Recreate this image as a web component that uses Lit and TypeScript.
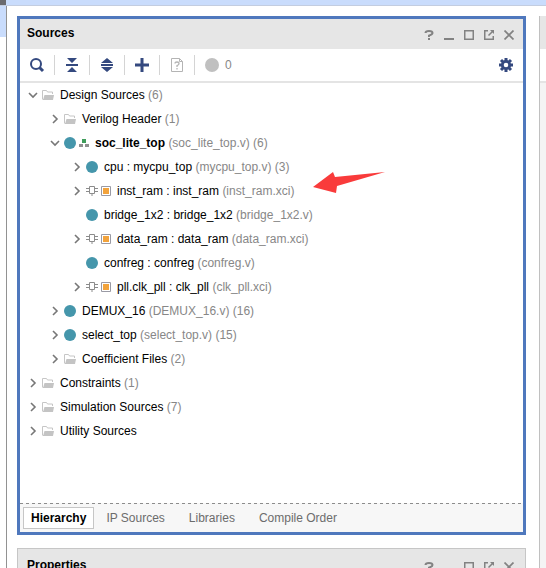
import { LitElement, html, svg, css, nothing } from "lit";
import { customElement, property, state } from "lit/decorators.js";
import { classMap } from "lit/directives/class-map.js";

type Icon = "folder" | "module" | "top" | "ip";

interface TreeNode {
  name: string;
  note?: string;
  icon: Icon;
  bold?: boolean;
  marked?: boolean;
  open?: boolean;
  expandable?: boolean;
  children?: TreeNode[];
}

const SOURCES: TreeNode[] = [
  {
    name: "Design Sources", note: "(6)", icon: "folder", open: true, expandable: true,
    children: [
      { name: "Verilog Header", note: "(1)", icon: "folder", expandable: true },
      {
        name: "soc_lite_top", note: "(soc_lite_top.v) (6)", icon: "top", bold: true, open: true, expandable: true,
        children: [
          { name: "cpu : mycpu_top", note: "(mycpu_top.v) (3)", icon: "module", expandable: true },
          { name: "inst_ram : inst_ram", note: "(inst_ram.xci)", icon: "ip", expandable: true, marked: true },
          { name: "bridge_1x2 : bridge_1x2", note: "(bridge_1x2.v)", icon: "module" },
          { name: "data_ram : data_ram", note: "(data_ram.xci)", icon: "ip", expandable: true },
          { name: "confreg : confreg", note: "(confreg.v)", icon: "module" },
          { name: "pll.clk_pll : clk_pll", note: "(clk_pll.xci)", icon: "ip", expandable: true },
        ],
      },
      { name: "DEMUX_16", note: "(DEMUX_16.v) (16)", icon: "module", expandable: true },
      { name: "select_top", note: "(select_top.v) (15)", icon: "module", expandable: true },
      { name: "Coefficient Files", note: "(2)", icon: "folder", expandable: true },
    ],
  },
  { name: "Constraints", note: "(1)", icon: "folder", expandable: true },
  { name: "Simulation Sources", note: "(7)", icon: "folder", expandable: true },
  { name: "Utility Sources", icon: "folder", expandable: true },
];

const icon = (w: number, h: number, body: unknown) =>
  html`<svg width=${w} height=${h} viewBox="0 0 ${w} ${h}" aria-hidden="true">${body}</svg>`;

const folder = icon(12, 12, svg`
  <path d="M.5 10V1.5H4.5L5.5 3H10.5V5" fill="none" stroke="#c6c6c6"/>
  <path d="M2.5 6H12L11 11H1Z" fill="#c4c4c4"/>
  <path d="M.5 10.5H11" stroke="#c4c4c4"/>`);
const disc = icon(12, 12, svg`<circle cx="6" cy="6" r="6" fill="#4596ab"/>`);
const hierarchy = icon(10, 10, svg`
  <path d="M3 1H7V5H3Z" fill="#3f9d5b"/>
  <path d="M0 6H4V9H0ZM6 6H10V9H6Z" fill="#8f8f8f"/>`);
const chip = icon(12, 12, svg`
  <path d="M3.5 1.5H8.5V8.5H3.5ZM0 3.5H3M0 6.5H3M9 3.5H12M9 6.5H12M6 9V11" fill="none" stroke="#8c8c8c"/>`);
const core = icon(10, 10, svg`
  <path d="M.5 .5H9.5V9.5H.5Z" fill="#fff" stroke="#9a9aa4"/>
  <path d="M2 2H8V8H2Z" fill="#f2a33c"/>`);
const chevronDown = icon(12, 12, svg`<path d="M2 4L6 8L10 4" fill="none" stroke="#777" stroke-width="1.6"/>`);
const chevronRight = icon(12, 12, svg`<path d="M4 2L8 6L4 10" fill="none" stroke="#777" stroke-width="1.6"/>`);

const search = icon(16, 16, svg`
  <circle cx="7" cy="7" r="5" fill="none" stroke="#34497f" stroke-width="2"/>
  <path d="M10.5 10.5L14 14" stroke="#34497f" stroke-width="3"/>`);
const collapse = icon(14, 14, svg`
  <path d="M2 0H12L7 5ZM2 14H12L7 9ZM1 6H13V8H1Z" fill="#34497f"/>`);
const expand = icon(14, 14, svg`
  <path d="M1 5L7 0L13 5ZM1 9L7 14L13 9ZM1 6H13V8H1Z" fill="#34497f"/>`);
const plus = icon(14, 14, svg`<path d="M7 0V14M0 7H14" stroke="#34497f" stroke-width="3"/>`);
const help = icon(12, 14, svg`
  <path d="M.5 .5H8.5L11.5 3.5V13.5H.5ZM8.5 .5V3.5H11.5" fill="none" stroke="#b4b4b4"/>
  <path d="M4 5.5Q4 4 6 4T8 5.7Q8 6.7 6 7.7V9M6 10V11.5" fill="none" stroke="#b4b4b4" stroke-width="1.3"/>`);
const gear = icon(14, 14, svg`
  <g stroke="#34497f" stroke-width="3">
    <path d="M7 0V3M7 11V14M0 7H3M11 7H14M2 2L4 4M10 10L12 12M12 2L10 4M4 10L2 12"/>
  </g>
  <circle cx="7" cy="7" r="3.7" fill="none" stroke="#34497f" stroke-width="2.8"/>`);

const question = icon(10, 10, svg`
  <path d="M1.5 3Q1.5 1 5 1T8.5 3Q8.5 4.5 5 5.6V7M5 8V10" fill="none" stroke="#828282" stroke-width="2"/>`);
const minimize = icon(10, 10, svg`<path d="M0 9H10" stroke="#828282" stroke-width="2"/>`);
const maximize = icon(10, 10, svg`<path d="M.75 .75H9.25V9.25H.75Z" fill="none" stroke="#828282" stroke-width="1.5"/>`);
const popout = icon(10, 10, svg`
  <path d="M4 .75H.75V9.25H9.25V6M4.5 5.5L9 1" fill="none" stroke="#828282" stroke-width="1.5"/>
  <path d="M6 0H10V4Z" fill="#828282"/>`);
const close = icon(10, 10, svg`<path d="M.5 .5L9.5 9.5M9.5 .5L.5 9.5" stroke="#828282" stroke-width="1.7"/>`);

const buttonReset = css`
  button {
    display: flex;
    align-items: center;
    justify-content: center;
    margin: 0;
    padding: 0;
    border: 0;
    background: none;
    font: inherit;
    color: inherit;
  }
  svg {
    display: block;
    flex: none;
  }
`;

@customElement("panel-header")
export class PanelHeader extends LitElement {
  @property() heading = "";

  static styles = [buttonReset, css`
    :host {
      display: flex;
      align-items: center;
      justify-content: space-between;
      flex: none;
      height: 30px;
      padding: 0 4px 0 7px;
      background: #e6e6e6;
    }
    .heading {
      margin: 0;
      font-size: 12px;
      line-height: 28px;
      font-weight: bold;
      align-self: flex-start;
    }
    .controls {
      display: flex;
    }
    .control {
      width: 20px;
      height: 30px;
      padding-top: 2px;
    }
  `];

  render() {
    const controls: [string, unknown][] = [
      ["Help", question], ["Minimize", minimize], ["Maximize", maximize], ["Float", popout], ["Close", close],
    ];
    return html`
      <h2 class="heading">${this.heading}</h2>
      <div class="controls">
        ${controls.map(([label, glyph]) => html`<button class="control" aria-label=${label}>${glyph}</button>`)}
      </div>`;
  }
}

@customElement("source-tree")
export class SourceTree extends LitElement {
  @state() private toggled = new Set<string>();

  static styles = [buttonReset, css`
    :host {
      display: block;
      padding: 0 7px;
    }
    .list {
      margin: 0;
      padding: 0;
      list-style: none;
    }
    .list .list {
      padding-left: 22px;
    }
    .row {
      display: flex;
      align-items: center;
      height: 24px;
      white-space: nowrap;
    }
    .toggle {
      width: 12px;
      height: 24px;
    }
    .icons {
      display: flex;
      align-items: center;
      gap: 3px;
      margin: 0 6px 0 3px;
    }
    .spacer {
      width: 12px;
    }
    .bold {
      font-weight: bold;
    }
    .note {
      color: #878787;
    }
    .label {
      position: relative;
    }
    .arrow {
      position: absolute;
      left: 100%;
      top: -11px;
      margin-left: 19px;
    }
  `];

  private toggle(name: string) {
    const next = new Set(this.toggled);
    next.has(name) ? next.delete(name) : next.add(name);
    this.toggled = next;
  }

  private icons(kind: Icon) {
    switch (kind) {
      case "folder": return folder;
      case "module": return disc;
      case "top": return html`${disc}${hierarchy}`;
      case "ip": return html`${chip}${core}`;
    }
  }

  private branch(nodes: TreeNode[], role: string): unknown {
    return html`<ul class="list" role=${role}>${nodes.map((n) => {
      const open = !!n.open !== this.toggled.has(n.name);
      return html`
        <li role="treeitem" aria-expanded=${n.expandable ? String(open) : nothing}>
          <div class="row">
            ${n.expandable
              ? html`<button class="toggle" aria-label="Toggle ${n.name}" @click=${() => this.toggle(n.name)}>
                  ${open ? chevronDown : chevronRight}</button>`
              : html`<span class="spacer"></span>`}
            <span class="icons">${this.icons(n.icon)}</span>
            <span class="label"><span class=${classMap({ bold: !!n.bold })}>${n.name}</span>
              <span class="note">${n.note}</span>${n.marked
                ? html`<svg class="arrow" width="72" height="22" viewBox="0 0 72 22" aria-hidden="true">
                    <path d="M0 15L20 0L22 5L72 0L24 14L23 21Z" fill="#f93b3b"/></svg>`
                : nothing}</span>
          </div>
          ${open && n.children ? this.branch(n.children, "group") : nothing}
        </li>`;
    })}</ul>`;
  }

  render() {
    return this.branch(SOURCES, "tree");
  }
}

@customElement("app-root")
export class AppRoot extends LitElement {
  @state() private tab = "Hierarchy";

  static styles = [buttonReset, css`
    :host {
      display: flex;
      flex-direction: column;
      height: 100vh;
      overflow: hidden;
      background: #fff;
      color: #000;
      font: 12px/16px "Liberation Sans", Arial, sans-serif;
    }
    .strip {
      display: flex;
      flex: none;
      height: 5px;
      background: #c9dcfc;
      border-bottom: 1px solid #c3cde0;
    }
    .strip-end {
      width: 6px;
      background: #6a6a6e;
    }
    .workspace {
      display: flex;
      flex: 1;
      min-height: 0;
    }
    .rail {
      flex: none;
      width: 6px;
      border-right: 1px solid #929292;
    }
    .rail-item {
      height: 31px;
      background: #c9dcfc;
    }
    .column {
      display: flex;
      flex-direction: column;
      flex: 1;
      gap: 13px;
      min-width: 0;
      padding: 10px 13px 0 10px;
    }
    .panel {
      display: flex;
      flex-direction: column;
      flex: 1;
      min-height: 0;
      border: 3px solid #4f78bd;
    }
    .panel-next {
      flex: none;
      height: 17px;
      overflow: hidden;
      border: 1px solid #c6c6c6;
      border-bottom: 0;
      padding: 2px 2px 0;
      background: #e6e6e6;
    }
    .toolbar {
      display: flex;
      align-items: center;
      flex: none;
      height: 32px;
      border-bottom: 2px solid #e4e4e4;
    }
    .tool {
      box-sizing: border-box;
      width: 35px;
      height: 20px;
      border-right: 1px solid #d4d4d4;
    }
    .messages {
      display: flex;
      align-items: center;
      gap: 6px;
      padding-left: 10px;
      color: #878787;
    }
    .dot {
      width: 14px;
      height: 14px;
      border-radius: 50%;
      background: #c0c0c0;
    }
    .settings {
      width: 34px;
      height: 20px;
      margin-left: auto;
    }
    .content {
      flex: 1;
      min-height: 0;
      overflow: hidden;
    }
    .tabs {
      display: flex;
      flex: none;
      padding: 4px 3px 3px;
      background: repeating-linear-gradient(90deg, #8c8c8c 0 3px, transparent 3px 6px) 0 0 / 100% 1px no-repeat #f7f7f7;
    }
    .tab {
      height: 22px;
      padding: 0 12px;
      color: #6c6c6c;
    }
    .tab.active {
      padding: 0 7px;
      border: 1px solid #c6c6c6;
      background: #fff;
      color: #000;
      font-weight: bold;
    }
    .side {
      flex: none;
      width: 6px;
      margin-top: 10px;
      border-left: 1px solid #c0c0c0;
      background: #f4f4f4;
    }
    .side-head {
      height: 33px;
      background: #e6e6e6;
    }
    .side-bar {
      height: 32px;
      background: #fff;
      border-bottom: 2px solid #e4e4e4;
    }
  `];

  render() {
    const tools: [string, unknown][] = [
      ["Search", search], ["Collapse All", collapse], ["Expand All", expand], ["Add Sources", plus], ["Show Missing", help],
    ];
    const tabs = ["Hierarchy", "IP Sources", "Libraries", "Compile Order"];
    return html`
      <div class="strip"><div class="strip-end"></div></div>
      <div class="workspace">
        <div class="rail"><div class="rail-item"></div></div>
        <main class="column">
          <section class="panel">
            <panel-header heading="Sources"></panel-header>
            <div class="toolbar" role="toolbar">
              ${tools.map(([label, glyph]) => html`<button class="tool" aria-label=${label}>${glyph}</button>`)}
              <div class="messages"><span class="dot"></span>0</div>
              <button class="settings" aria-label="Settings">${gear}</button>
            </div>
            <div class="content"><source-tree></source-tree></div>
            <div class="tabs" role="tablist">
              ${tabs.map((t) => html`
                <button role="tab" aria-selected=${t === this.tab}
                  class=${classMap({ tab: true, active: t === this.tab })}
                  @click=${() => (this.tab = t)}>${t}</button>`)}
            </div>
          </section>
          <section class="panel-next"><panel-header heading="Properties"></panel-header></section>
        </main>
        <aside class="side"><div class="side-head"></div><div class="side-bar"></div></aside>
      </div>`;
  }
}
